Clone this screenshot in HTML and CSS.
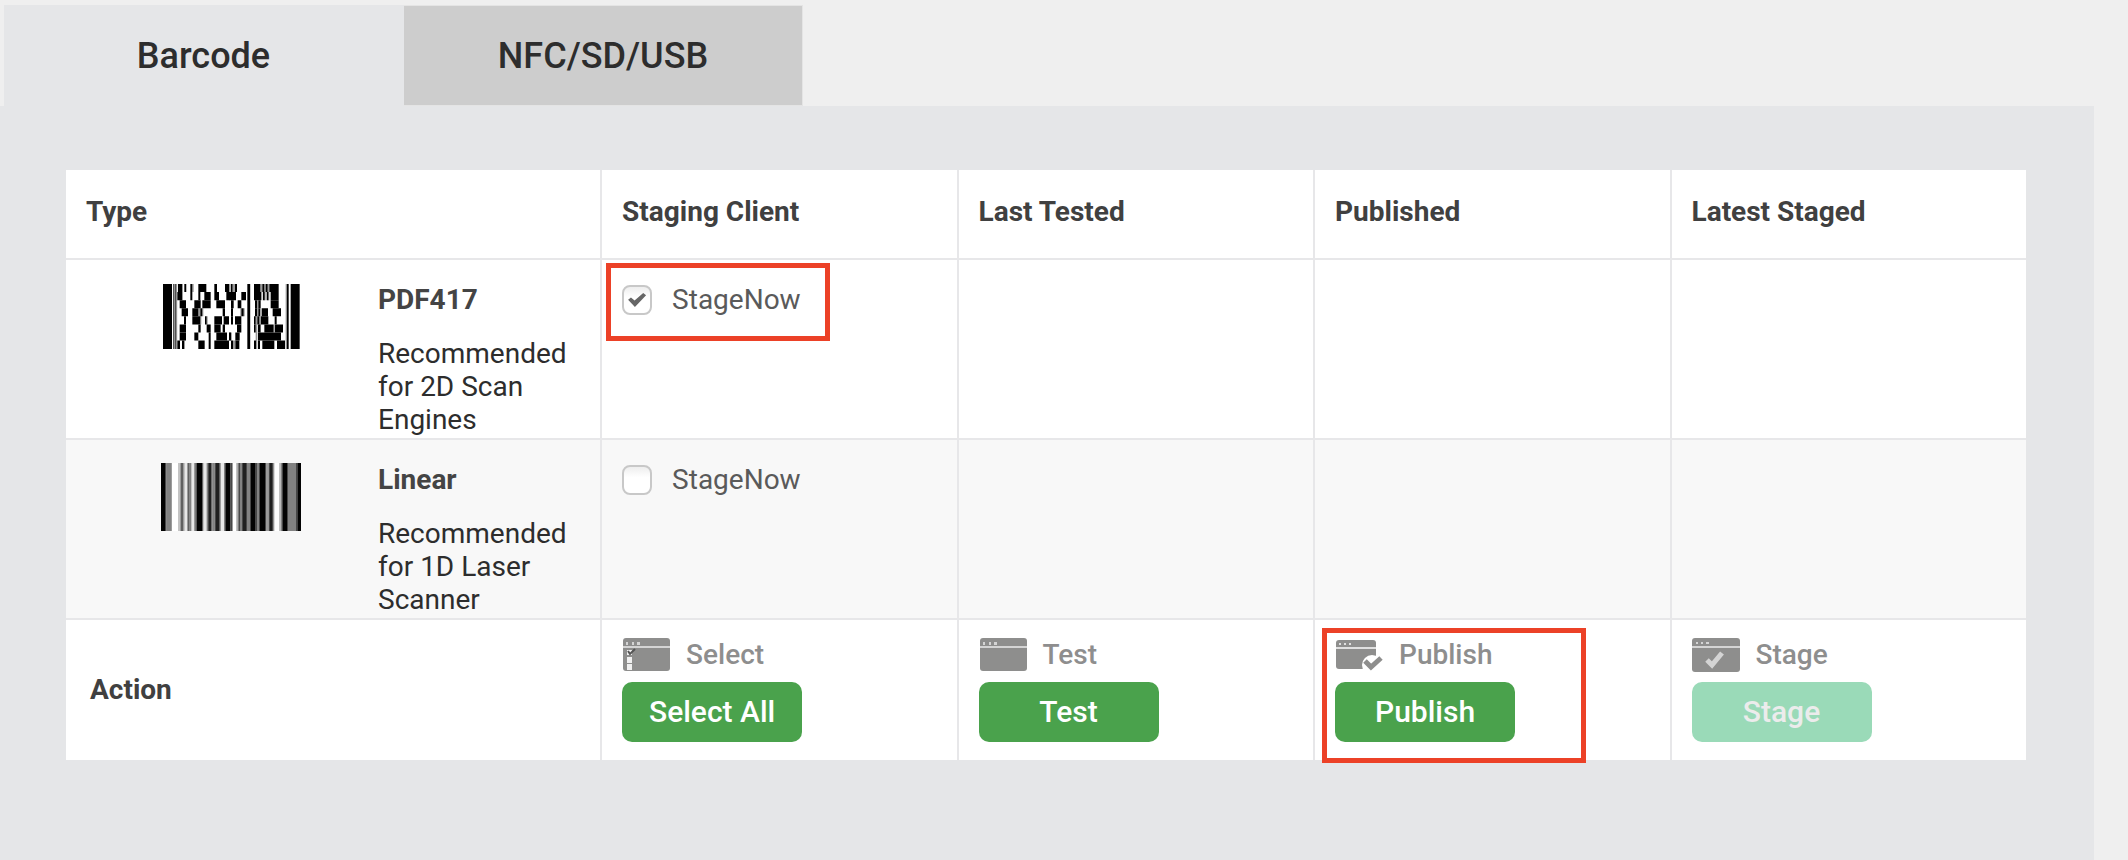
FILE: index.html
```html
<!DOCTYPE html>
<html lang="en">
<head>
<meta charset="utf-8">
<meta name="viewport" content="width=device-width, initial-scale=1">
<title>Staging</title>
<link rel="stylesheet" href="styles.css">
</head>
<body>
<div class="tabs" role="tablist">
  <button class="tab tab-active" type="button" role="tab" aria-selected="true">Barcode</button>
  <button class="tab" type="button" role="tab" aria-selected="false">NFC/SD/USB</button>
</div>
<main class="panel">
  <table class="staging">
    <thead>
      <tr>
        <th class="type-col" scope="col">Type</th>
        <th scope="col">Staging Client</th>
        <th scope="col">Last Tested</th>
        <th scope="col">Published</th>
        <th scope="col">Latest Staged</th>
      </tr>
    </thead>
    <tbody>
      <tr>
        <td class="type-cell">
          <div class="type">
            <svg class="code-2d" viewBox="38 43 411 193" preserveAspectRatio="none" role="img" aria-label="PDF417 barcode">
              <path fill="#fff" d="M38 43h411v193H38z"/>
              <path fill="#ccc" d="M72 43h3v193h-3zM78 43h3v193h-3zM299 43h3v193h-3zM405 43h4v193h-4z"/>
              <path fill="#999" d="M107 43h2v24h-2zM126 43h4v24h-4zM236 43h5v48h-5zM248 43h6v24h-6zM330 43h6v48h-6zM342 43h4v48h-4zM352 43h5v48h-5zM95 43h3v48h-3zM144 115h6v24h-6zM156 115h3v24h-3zM270 115h3v24h-3zM280 115h3v24h-3zM150 139h3v24h-3zM169 139h3v24h-3zM316 139h5v97h-5zM327 139h5v48h-5zM320 91h4v48h-4zM236 187h6v24h-6zM248 211h6v25h-6zM101 211h3v25h-3z"/>
              <path d="M38 43h27v193H38zM69 43h3v193h-3zM75 43h3v193h-3zM291 43h8v193h-8zM409 43h6v193h-6zM421 43h27v193h-27z"/>
              <path d="M83 43h12v24H83zM102 43h5v24h-5zM120 43h6v48h-6zM144 43h24v24h-24zM192 43h8v24h-8zM224 43h12v24h-12zM242 43h5v24h-5zM254 43h6v24h-6zM311 43h19v24h-19zM336 43h6v24h-6zM346 43h6v24h-6zM357 43h28v24h-28z"/>
              <path d="M81 67h14v24H81zM144 67h6v24h-6zM162 67h19v24h-19zM192 67h14v24h-14zM228 67h29v24h-29zM273 67h14v24h-14zM311 67h21v24h-21zM338 67h5v24h-5zM349 67h5v24h-5zM361 67h24v24h-24z"/>
              <path d="M88 91h19v24H88zM132 91h19v24h-19zM156 91h25v24h-25zM198 91h26v24h-26zM242 91h8v24h-8zM262 91h11v24h-11zM314 91h6v24h-6zM324 91h7v24h-7zM361 91h24v24h-24z"/>
              <path d="M94 115h19v24H94zM126 115h18v24h-18zM150 115h6v24h-6zM217 115h7v24h-7zM242 115h6v24h-6zM273 115h7v24h-7zM314 115h6v24h-6zM324 115h6v24h-6zM334 115h19v24h-19zM367 115h25v24h-25z"/>
              <path d="M101 139h6v24h-6zM126 139h24v24h-24zM164 139h5v24h-5zM192 139h23v24h-23zM220 139h16v24h-16zM242 139h6v24h-6zM254 139h19v24h-19zM311 139h5v24h-5zM321 139h6v24h-6zM332 139h22v24h-22zM373 139h6v24h-6z"/>
              <path d="M88 163h19v24H88zM144 163h7v24h-7zM169 163h12v24h-12zM192 163h19v24h-19zM217 163h7v24h-7zM260 163h13v24h-13zM311 163h5v24h-5zM323 163h7v24h-7zM342 163h28v24h-28zM373 163h25v24h-25z"/>
              <path d="M88 187h19v24H88zM132 187h12v24h-12zM175 187h6v49h-6zM198 187h32v24h-32zM236 187h7v24h-7zM255 187h13v24h-13zM323 187h25v24h-25zM342 187h50v24h-50z"/>
              <path d="M81 211h8v25h-8zM95 211h6v25h-6zM144 211h19v25h-19zM192 211h44v25h-44zM242 211h6v25h-6zM255 211h12v25h-12zM311 211h6v25h-6zM323 211h6v25h-6zM336 211h36v25h-36zM380 211h24v25h-24z"/>
            </svg>
            <div>
              <h2 class="type-name">PDF417</h2>
              <p class="type-note">Recommended for 2D Scan Engines</p>
            </div>
          </div>
        </td>
        <td>
          <label class="option"><input class="check" type="checkbox" checked>StageNow</label>
          <span class="mark mark-client"></span>
        </td>
        <td></td>
        <td></td>
        <td></td>
      </tr>
      <tr class="alt">
        <td class="type-cell">
          <div class="type">
            <svg class="code-1d" viewBox="33 0 420 10" preserveAspectRatio="none" role="img" aria-label="Linear barcode">
              <path fill="#fff" d="M33 0h420v10H33z"/>
              <path fill="#e8e8e8" d="M105 0h6v10h-6zM126 0h6v10h-6zM162 0h6v10h-6zM213 0h9v10h-9z"/>
              <path fill="#c4c4c4" d="M84 0h6v10h-6zM102 0h3v10h-3zM123 0h3v10h-3zM159 0h3v10h-3zM168 0h3v10h-3zM258 0h5v10h-5zM387 0h5v10h-5z"/>
              <path fill="#9c9c9c" d="M63 0h3v10h-3zM90 0h3v10h-3zM99 0h3v10h-3zM111 0h3v10h-3zM132 0h4v10h-4zM210 0h3v10h-3zM246 0h3v10h-3zM348 0h8v10h-8zM370 0h3v10h-3z"/>
              <path fill="#828282" d="M49 0h14v10H49zM119 0h4v10h-4zM171 0h3v10h-3zM187 0h7v10h-7zM222 0h3v10h-3zM270 0h6v10h-6zM291 0h9v10h-9zM321 0h6v10h-6zM392 0h4v10h-4zM414 0h24v10h-24z"/>
              <path fill="#606060" d="M93 0h6v10h-6zM114 0h5v10h-5zM156 0h3v10h-3zM184 0h3v10h-3zM207 0h3v10h-3zM263 0h3v10h-3z"/>
              <path fill="#484848" d="M45 0h4v10h-4zM136 0h4v10h-4zM174 0h3v10h-3zM194 0h4v10h-4zM225 0h3v10h-3zM241 0h5v10h-5zM266 0h4v10h-4zM276 0h3v10h-3zM288 0h3v10h-3zM300 0h3v10h-3zM315 0h6v10h-6zM327 0h3v10h-3zM345 0h3v10h-3zM356 0h4v10h-4zM366 0h4v10h-4zM396 0h3v10h-3zM411 0h3v10h-3zM438 0h4v10h-4z"/>
              <path fill="#202020" d="M177 0h7v10h-7zM198 0h9v10h-9zM279 0h9v10h-9zM360 0h6v10h-6z"/>
              <path fill="#030303" d="M33 0h12v10H33zM140 0h16v10h-16zM228 0h13v10h-13zM303 0h12v10h-12zM330 0h15v10h-15zM399 0h12v10h-12zM442 0h11v10h-11z"/>
            </svg>
            <div>
              <h2 class="type-name">Linear</h2>
              <p class="type-note">Recommended for 1D Laser Scanner</p>
            </div>
          </div>
        </td>
        <td>
          <label class="option"><input class="check" type="checkbox">StageNow</label>
        </td>
        <td></td>
        <td></td>
        <td></td>
      </tr>
    </tbody>
    <tfoot>
      <tr>
        <th class="action-head" scope="row">Action</th>
        <td class="action">
          <div class="action-label">
            <svg class="icon" viewBox="0 0 48 34" aria-hidden="true">
              <rect x="1" y="0" width="47" height="33" rx="3" fill="#8e8e8d"/>
              <path fill="#d4d4d4" d="M1 8h47v2H1zM4 4h2v3H4zM10 4h2v3h-2zM15 4h3v3h-3z"/>
              <path fill="#f0f0f0" d="M5 12h5v5H5zM5 19h5v6H5zM5 26h5v6H5z"/>
              <path d="M6 13l2 3 5-5" fill="none" stroke="#555" stroke-width="2"/>
            </svg>
            Select
          </div>
          <button class="btn" type="button">Select All</button>
        </td>
        <td class="action">
          <div class="action-label">
            <svg class="icon" viewBox="0 0 48 34" aria-hidden="true">
              <rect x="1" y="0" width="47" height="33" rx="3" fill="#8e8e8d"/>
              <path fill="#d4d4d4" d="M1 8h47v2H1zM4 4h2v3H4zM10 4h2v3h-2zM15 4h3v3h-3z"/>
            </svg>
            Test
          </div>
          <button class="btn" type="button">Test</button>
        </td>
        <td class="action">
          <div class="action-label">
            <svg class="icon" viewBox="0 0 48 34" aria-hidden="true">
              <rect x="1" y="2" width="40" height="29" rx="3" fill="#8e8e8d"/>
              <path fill="#e0e0e0" d="M1 9h40v2H1zM4 5h2v2H4zM9 5h2v2H9zM14 5h2v2h-2z"/>
              <circle cx="37" cy="27" r="10" fill="#fff"/>
              <path d="M30 23l6 6 10-9" fill="none" stroke="#8e8e8d" stroke-width="5"/>
            </svg>
            Publish
          </div>
          <button class="btn" type="button">Publish</button>
          <span class="mark mark-publish"></span>
        </td>
        <td class="action">
          <div class="action-label">
            <svg class="icon" viewBox="0 0 48 34" aria-hidden="true">
              <rect x="0" y="0" width="48" height="34" rx="3" fill="#8e8e8d"/>
              <path fill="#d4d4d4" d="M0 8h48v2H0zM4 4h2v2H4zM9 4h2v2H9zM14 4h3v2h-3z"/>
              <path d="M15 22l5 5 10-12" fill="none" stroke="#d4d4d4" stroke-width="5"/>
            </svg>
            Stage
          </div>
          <button class="btn" type="button" disabled>Stage</button>
        </td>
      </tr>
    </tfoot>
  </table>
</main>
</body>
</html>
```
FILE: styles.css
```css
* {
  box-sizing: border-box;
}

body {
  display: flex;
  flex-direction: column;
  min-height: 100vh;
  margin: 0;
  background: #efefef;
  color: #2d2d2d;
  font: 400 28px/34px Roboto, "Liberation Sans", sans-serif;
}

.tabs {
  display: flex;
  padding: 5px 0 0 4px;
}

.tab {
  width: 399px;
  height: 101px;
  padding: 0;
  border: 1px solid #e4e4e4;
  border-left: 0;
  background: #cdcdcd;
  color: #2d2d2d;
  font: 500 36px/42px Roboto, "Liberation Sans", sans-serif;
}

.tab-active {
  width: 400px;
  border-color: #e5e6e8;
  background: #e5e6e8;
}

.panel {
  flex: 1;
  margin-right: 34px;
  padding: 64px 68px 64px 66px;
  background: #e5e6e8;
}

.staging {
  width: 100%;
  table-layout: fixed;
  border-collapse: separate;
  border-spacing: 0;
  background: #fff;
}

.staging th,
.staging td {
  position: relative;
  padding: 0 20px;
  border-left: 2px solid #e7e7e9;
  border-bottom: 2px solid #e7e7e9;
  text-align: left;
  vertical-align: top;
}

.staging th:first-child,
.staging td:first-child {
  border-left: 0;
}

.staging th {
  color: #404040;
  font-weight: 700;
}

.staging thead th {
  padding-top: 25px;
  padding-bottom: 29px;
}

.staging .type-col {
  width: 27.25%;
}

.staging tfoot th,
.staging tfoot td {
  border-bottom: 0;
}

.staging .action-head {
  padding-left: 24px;
  vertical-align: middle;
}

.staging .type-cell {
  padding: 23px 10px 2px 18px;
}

.alt {
  background: #f8f8f8;
}

.type {
  display: grid;
  grid-template-columns: 294px 1fr;
  align-items: start;
}

.type svg {
  display: block;
  justify-self: center;
}

.code-2d {
  width: 137px;
  height: 65px;
  margin-top: 1px;
}

.code-1d {
  width: 140px;
  height: 68px;
}

.type-name {
  margin: 0 0 20px;
  color: #444;
  font-size: 28px;
  font-weight: 700;
}

.type-note {
  margin: 0;
  line-height: 33px;
}

.option {
  display: flex;
  align-items: center;
  gap: 20px;
  padding-top: 23px;
  color: #5a5a5a;
}

.check {
  display: grid;
  place-content: center;
  width: 30px;
  height: 30px;
  margin: 0;
  border: 2px solid #c8c8c8;
  border-radius: 8px;
  background: linear-gradient(#eee, #fff 40%);
  appearance: none;
}

.check:checked::before {
  content: "";
  width: 18px;
  height: 14px;
  background: #666;
  clip-path: polygon(0 48%, 16% 32%, 36% 54%, 84% 0, 100% 16%, 38% 100%);
}

.mark {
  position: absolute;
  border: 5px solid #ec4127;
  pointer-events: none;
}

.mark-client {
  top: 3px;
  left: 4px;
  width: 224px;
  height: 78px;
}

.mark-publish {
  top: 8px;
  left: 7px;
  width: 264px;
  height: 135px;
}

.staging .action {
  padding-top: 18px;
  padding-bottom: 18px;
}

.action-label {
  display: flex;
  align-items: center;
  gap: 16px;
  margin-bottom: 10px;
  color: #8e8e8e;
  font-weight: 500;
}

.icon {
  width: 48px;
  height: 34px;
}

.btn {
  display: block;
  width: 180px;
  height: 60px;
  padding: 0;
  border: 0;
  border-radius: 10px;
  background: #4aa24c;
  color: #fff;
  font: 500 30px/34px Roboto, "Liberation Sans", sans-serif;
}

.btn:disabled {
  background: #9adab8;
  color: #ececec;
}
```
